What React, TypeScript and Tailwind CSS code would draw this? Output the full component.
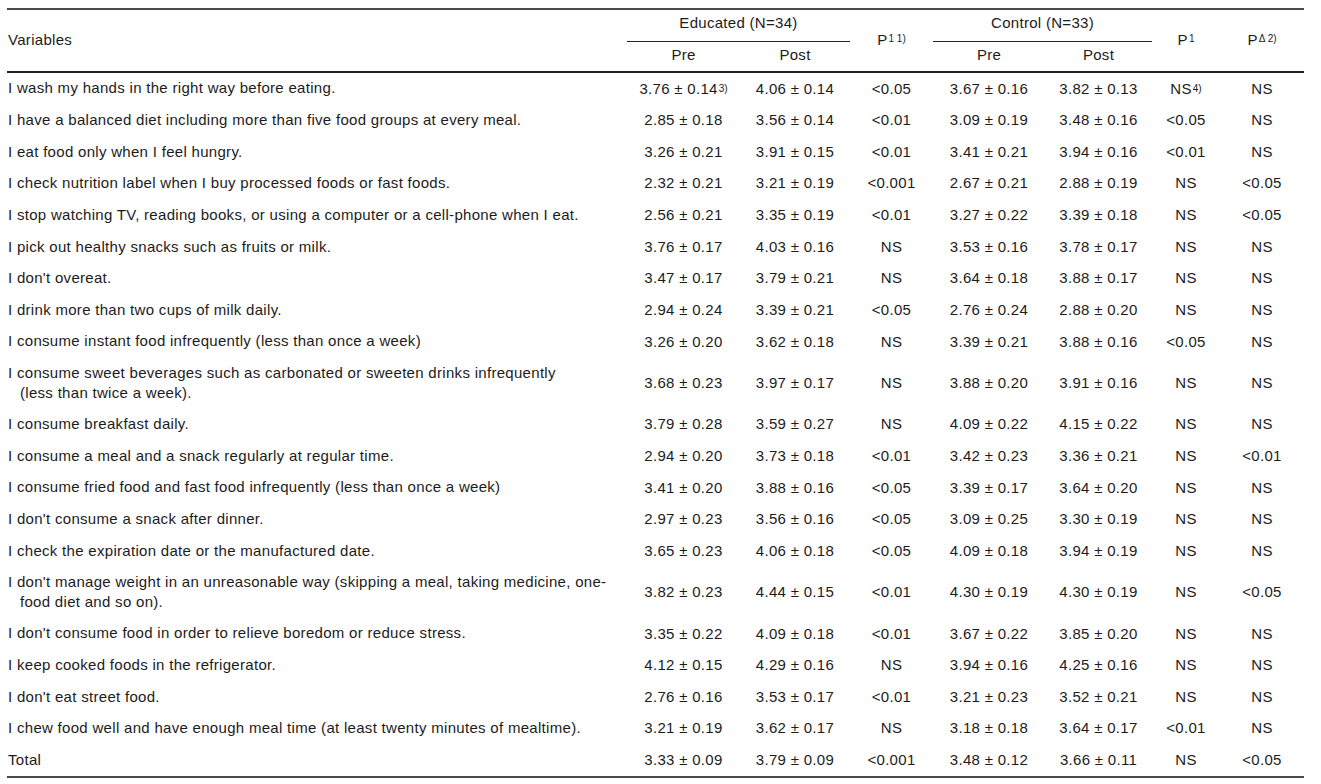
import React from "react";

type Row = {
  v: string;
  v2?: string;
  ep: string;
  epSup?: string;
  eq: string;
  p1: string;
  cp: string;
  cq: string;
  p2: string;
  p2Sup?: string;
  p3: string;
};

const rows: Row[] = [
  { v: "I wash my hands in the right way before eating.", ep: "3.76 ± 0.14", epSup: "3)", eq: "4.06 ± 0.14", p1: "<0.05", cp: "3.67 ± 0.16", cq: "3.82 ± 0.13", p2: "NS", p2Sup: "4)", p3: "NS" },
  { v: "I have a balanced diet including more than five food groups at every meal.", ep: "2.85 ± 0.18", eq: "3.56 ± 0.14", p1: "<0.01", cp: "3.09 ± 0.19", cq: "3.48 ± 0.16", p2: "<0.05", p3: "NS" },
  { v: "I eat food only when I feel hungry.", ep: "3.26 ± 0.21", eq: "3.91 ± 0.15", p1: "<0.01", cp: "3.41 ± 0.21", cq: "3.94 ± 0.16", p2: "<0.01", p3: "NS" },
  { v: "I check nutrition label when I buy processed foods or fast foods.", ep: "2.32 ± 0.21", eq: "3.21 ± 0.19", p1: "<0.001", cp: "2.67 ± 0.21", cq: "2.88 ± 0.19", p2: "NS", p3: "<0.05" },
  { v: "I stop watching TV, reading books, or using a computer or a cell-phone when I eat.", ep: "2.56 ± 0.21", eq: "3.35 ± 0.19", p1: "<0.01", cp: "3.27 ± 0.22", cq: "3.39 ± 0.18", p2: "NS", p3: "<0.05" },
  { v: "I pick out healthy snacks such as fruits or milk.", ep: "3.76 ± 0.17", eq: "4.03 ± 0.16", p1: "NS", cp: "3.53 ± 0.16", cq: "3.78 ± 0.17", p2: "NS", p3: "NS" },
  { v: "I don't overeat.", ep: "3.47 ± 0.17", eq: "3.79 ± 0.21", p1: "NS", cp: "3.64 ± 0.18", cq: "3.88 ± 0.17", p2: "NS", p3: "NS" },
  { v: "I drink more than two cups of milk daily.", ep: "2.94 ± 0.24", eq: "3.39 ± 0.21", p1: "<0.05", cp: "2.76 ± 0.24", cq: "2.88 ± 0.20", p2: "NS", p3: "NS" },
  { v: "I consume instant food infrequently (less than once a week)", ep: "3.26 ± 0.20", eq: "3.62 ± 0.18", p1: "NS", cp: "3.39 ± 0.21", cq: "3.88 ± 0.16", p2: "<0.05", p3: "NS" },
  { v: "I consume sweet beverages such as carbonated or sweeten drinks infrequently", v2: "(less than twice a week).", ep: "3.68 ± 0.23", eq: "3.97 ± 0.17", p1: "NS", cp: "3.88 ± 0.20", cq: "3.91 ± 0.16", p2: "NS", p3: "NS" },
  { v: "I consume breakfast daily.", ep: "3.79 ± 0.28", eq: "3.59 ± 0.27", p1: "NS", cp: "4.09 ± 0.22", cq: "4.15 ± 0.22", p2: "NS", p3: "NS" },
  { v: "I consume a meal and a snack regularly at regular time.", ep: "2.94 ± 0.20", eq: "3.73 ± 0.18", p1: "<0.01", cp: "3.42 ± 0.23", cq: "3.36 ± 0.21", p2: "NS", p3: "<0.01" },
  { v: "I consume fried food and fast food infrequently (less than once a week)", ep: "3.41 ± 0.20", eq: "3.88 ± 0.16", p1: "<0.05", cp: "3.39 ± 0.17", cq: "3.64 ± 0.20", p2: "NS", p3: "NS" },
  { v: "I don't consume a snack after dinner.", ep: "2.97 ± 0.23", eq: "3.56 ± 0.16", p1: "<0.05", cp: "3.09 ± 0.25", cq: "3.30 ± 0.19", p2: "NS", p3: "NS" },
  { v: "I check the expiration date or the manufactured date.", ep: "3.65 ± 0.23", eq: "4.06 ± 0.18", p1: "<0.05", cp: "4.09 ± 0.18", cq: "3.94 ± 0.19", p2: "NS", p3: "NS" },
  { v: "I don't manage weight in an unreasonable way (skipping a meal, taking medicine, one-", v2: "food diet and so on).", ep: "3.82 ± 0.23", eq: "4.44 ± 0.15", p1: "<0.01", cp: "4.30 ± 0.19", cq: "4.30 ± 0.19", p2: "NS", p3: "<0.05" },
  { v: "I don't consume food in order to relieve boredom or reduce stress.", ep: "3.35 ± 0.22", eq: "4.09 ± 0.18", p1: "<0.01", cp: "3.67 ± 0.22", cq: "3.85 ± 0.20", p2: "NS", p3: "NS" },
  { v: "I keep cooked foods in the refrigerator.", ep: "4.12 ± 0.15", eq: "4.29 ± 0.16", p1: "NS", cp: "3.94 ± 0.16", cq: "4.25 ± 0.16", p2: "NS", p3: "NS" },
  { v: "I don't eat street food.", ep: "2.76 ± 0.16", eq: "3.53 ± 0.17", p1: "<0.01", cp: "3.21 ± 0.23", cq: "3.52 ± 0.21", p2: "NS", p3: "NS" },
  { v: "I chew food well and have enough meal time (at least twenty minutes of mealtime).", ep: "3.21 ± 0.19", eq: "3.62 ± 0.17", p1: "NS", cp: "3.18 ± 0.18", cq: "3.64 ± 0.17", p2: "<0.01", p3: "NS" },
  { v: "Total", ep: "3.33 ± 0.09", eq: "3.79 ± 0.09", p1: "<0.001", cp: "3.48 ± 0.12", cq: "3.66 ± 0.11", p2: "NS", p3: "<0.05" },
];

const GRID = "grid grid-cols-[620px_113px_110px_83px_112px_107px_68px_84px]";

function Cell({ t, sup }: { t: string; sup?: string }) {
  return (
    <div className="flex items-center justify-center whitespace-nowrap">
      <span>
        {t}
        {sup && <sup className="text-[10px] tracking-normal relative -top-[2px] ml-[1px]">{sup}</sup>}
      </span>
    </div>
  );
}

export default function App() {
  return (
    <div className="w-[1321px] h-[784px] overflow-hidden bg-white text-[#1c1c1c] font-['Liberation_Sans',Arial,sans-serif] text-[15px] tracking-[0.3px]">
      <div className="ml-[7px] mt-[8px] w-[1297px]">
        <div className="border-t-2 border-[#4a4a4a]" />
        <div className={`${GRID} grid-rows-[32px_29px] border-b-2 border-[#222]`}>
          <div className="row-span-2 flex items-center pl-[1px]">Variables</div>
          <div className="col-span-2 flex items-center justify-center pb-[6px] border-b border-[#222] leading-none">
            Educated (N=34)
          </div>
          <div className="row-span-2 flex items-center justify-center">
            <span>
              P<sup className="text-[10px] tracking-normal relative -top-[3px] ml-[1px]">1 1)</sup>
            </span>
          </div>
          <div className="col-span-2 flex items-center justify-center pb-[6px] border-b border-[#222] leading-none">
            Control (N=33)
          </div>
          <div className="row-span-2 flex items-center justify-center">
            <span>
              P<sup className="text-[10px] tracking-normal relative -top-[3px] ml-[1px]">1</sup>
            </span>
          </div>
          <div className="row-span-2 flex items-center justify-center">
            <span>
              P<sup className="text-[10px] tracking-normal relative -top-[3px] ml-[1px]">Δ 2)</sup>
            </span>
          </div>
          <div className="flex items-center justify-center col-start-2 row-start-2 pb-[2px]">Pre</div>
          <div className="flex items-center justify-center col-start-3 row-start-2 pb-[2px]">Post</div>
          <div className="flex items-center justify-center col-start-5 row-start-2 pb-[2px]">Pre</div>
          <div className="flex items-center justify-center col-start-6 row-start-2 pb-[2px]">Post</div>
        </div>
        <div className="border-b-2 border-[#4a4a4a]">
          {rows.map((r, i) => (
            <div key={i} className={`${GRID} ${r.v2 ? "h-[51px]" : "h-[31.65px]"}`}>
              <div className="flex flex-col justify-center pl-[1px] leading-[20px] pb-[1px]">
                <span className="whitespace-nowrap">{r.v}</span>
                {r.v2 && <span className="pl-[12px] whitespace-nowrap">{r.v2}</span>}
              </div>
              <Cell t={r.ep} sup={r.epSup} />
              <Cell t={r.eq} />
              <Cell t={r.p1} />
              <Cell t={r.cp} />
              <Cell t={r.cq} />
              <Cell t={r.p2} sup={r.p2Sup} />
              <Cell t={r.p3} />
            </div>
          ))}
        </div>
      </div>
    </div>
  );
}
